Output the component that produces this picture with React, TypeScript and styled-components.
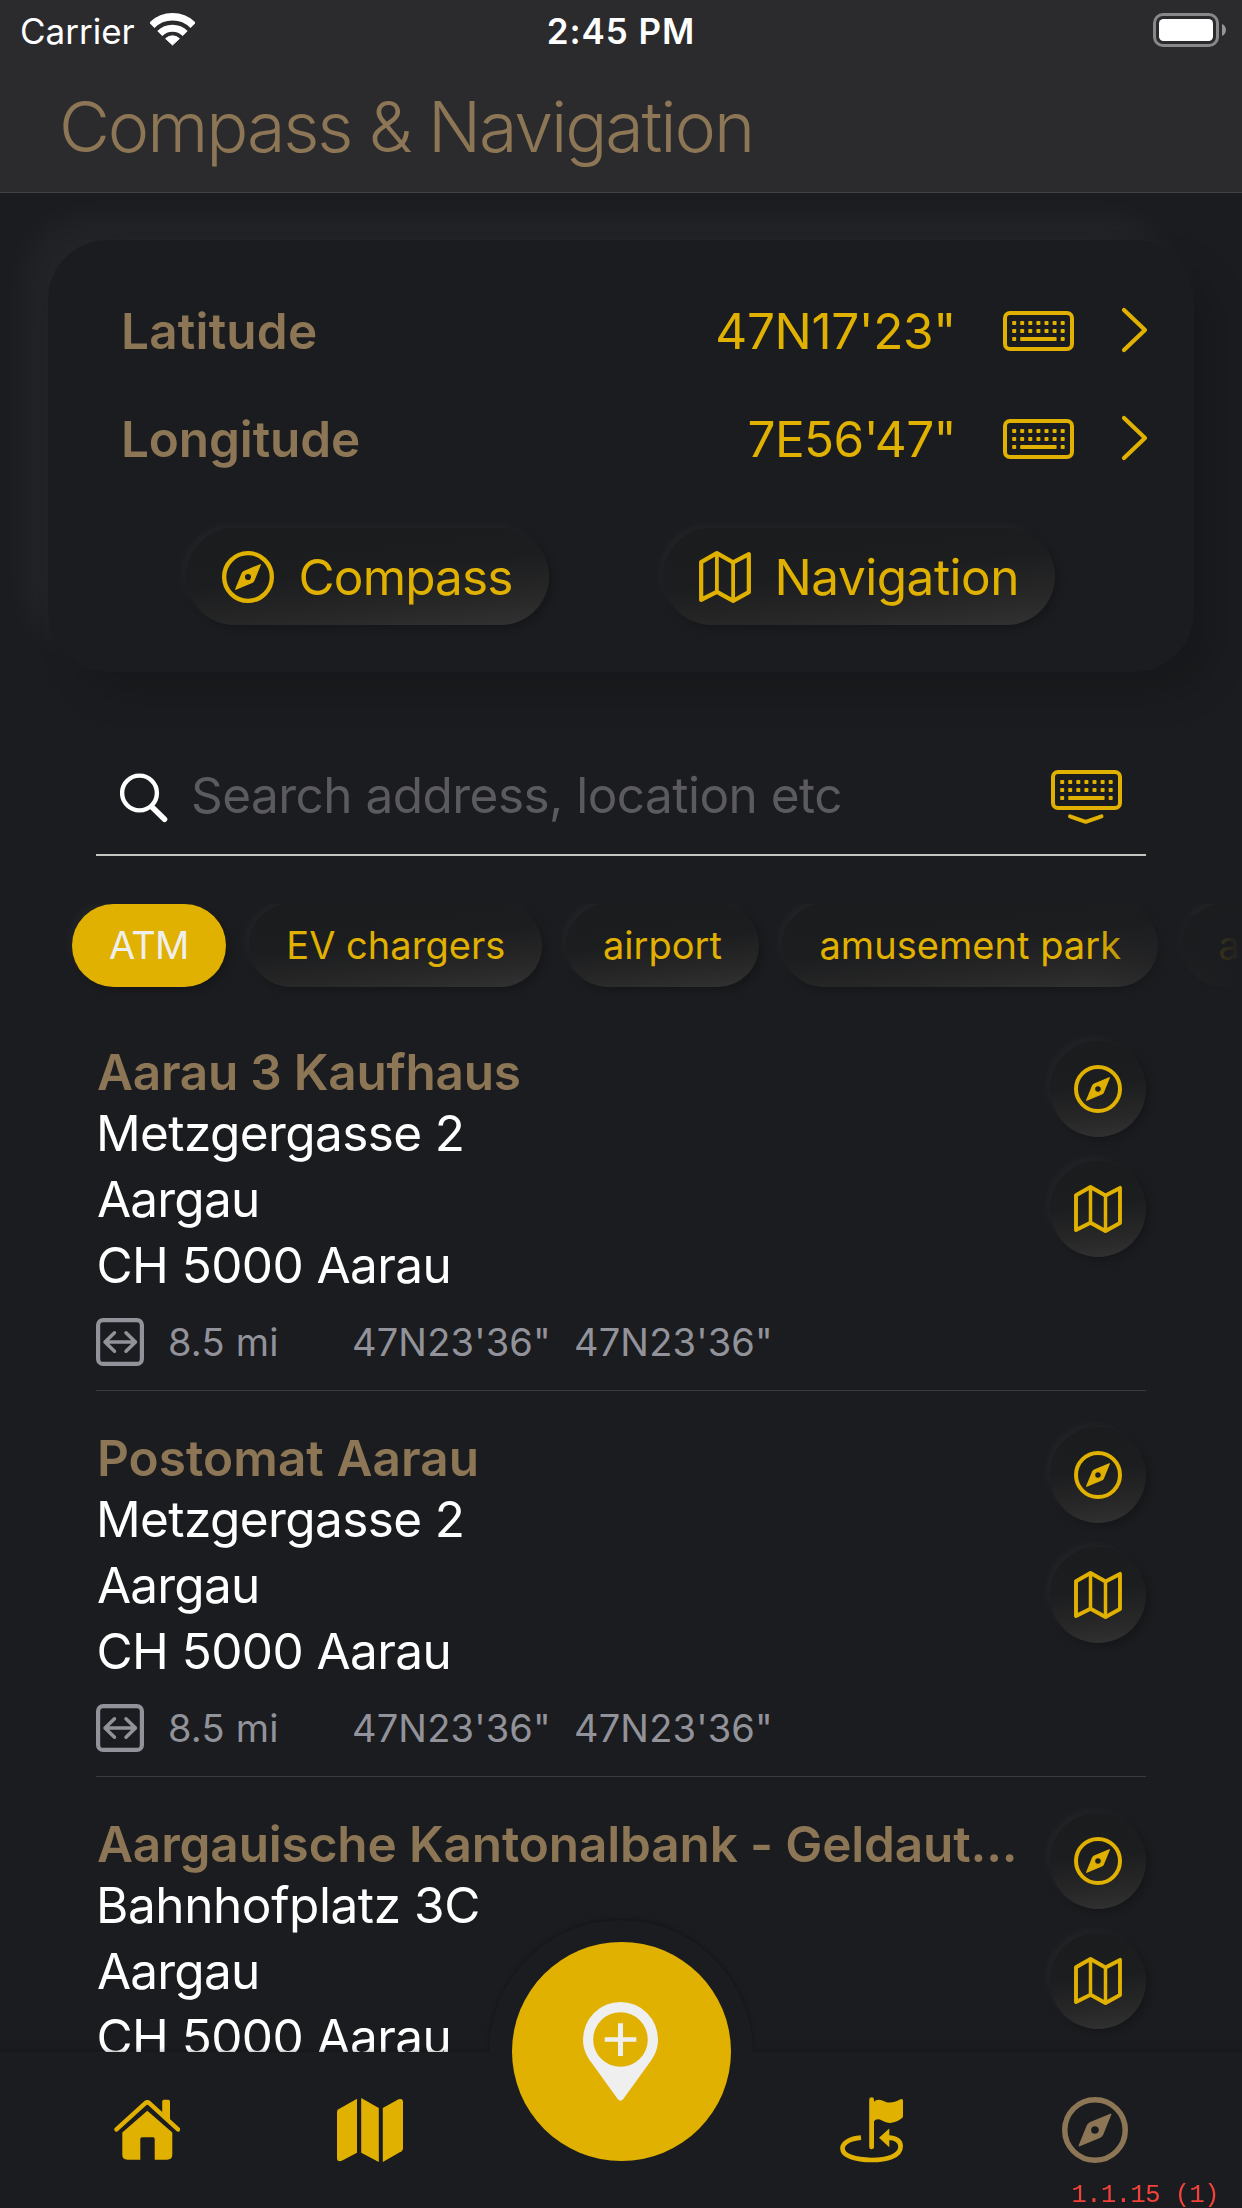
import React from "react";
import styled, { createGlobalStyle, css } from "styled-components";

const color = {
  bg: "#1b1c1f",
  header: "#2b2b2d",
  gold: "#e0b100",
  bronze: "#8c7655",
  grey: "#92929a",
};

const GlobalStyle = createGlobalStyle`
  * { box-sizing: border-box; }
  body { margin: 0; background: ${color.bg}; }
  svg { display: block; flex: none; }
`;

const raised = css`
  background: linear-gradient(174deg, #1b1c1e 0%, #1c1d1f 45%, #272727 76%, #323232 100%);
  box-shadow: -4px -4px 7px rgba(255, 255, 255, 0.032), 4px 4px 7px rgba(0, 0, 0, 0.18);
`;

const Screen = styled.main`
  position: relative;
  width: 1242px;
  height: 2208px;
  overflow: hidden;
  background: ${color.bg};
  font-family: Inter, "Liberation Sans", sans-serif;
  font-size: 49.5px;
  color: #fff;
`;

const Text = styled.span<{ $track?: number }>`
  letter-spacing: ${(p) => p.$track ?? 0}px;
  white-space: nowrap;
`;

/* ---------- header ---------- */

const Header = styled.header`
  position: relative;
  height: 193px;
  background: ${color.header};
  border-bottom: 1px solid #414144;
  z-index: 1;
`;

const StatusBar = styled.div`
  display: grid;
  grid-template-columns: 1fr auto 1fr;
  align-items: center;
  height: 60px;
  padding: 0 16px 0 20px;
  font-size: 35px;
  line-height: 44px;
`;

const Carrier = styled.div`
  display: flex;
  align-items: center;
  gap: 15px;
  padding-top: 2px;

  svg { margin-top: -4px; }
`;

const Clock = styled.div`
  font-weight: 600;
  padding: 2px 4px 0 0;
`;

const BatterySlot = styled.div`
  display: flex;
  justify-content: flex-end;
`;

const Title = styled.h1`
  margin: 25px 0 0 59px;
  font-size: 70px;
  line-height: 84px;
  font-weight: 300;
  color: ${color.bronze};
`;

/* ---------- coordinates card ---------- */

const Card = styled.section`
  height: 432px;
  margin: 47px 48px 0;
  padding-top: 37px;
  border-radius: 60px;
  background: ${color.bg};
  box-shadow: -24px -24px 36px rgba(255, 255, 255, 0.036), 24px 24px 36px rgba(0, 0, 0, 0.14);
`;

const CoordinateRow = styled.div`
  display: flex;
  align-items: center;
  height: 108px;
  padding: 0 46px 0 73px;
  color: ${color.gold};
`;

const Label = styled.div`
  flex: 1;
  font-weight: 600;
  color: ${color.bronze};
`;

const Value = styled.div`
  margin-right: 47px;
`;

const ChevronSlot = styled.div`
  margin: -2px 0 0 47px;
`;

const Actions = styled.div`
  display: flex;
  justify-content: space-between;
  margin-top: 35px;
  padding: 0 139px 0 138px;
`;

const Pill = styled.button<{ $gap: number }>`
  ${raised}
  display: flex;
  align-items: center;
  gap: ${(p) => p.$gap}px;
  height: 97px;
  padding: 0 36px;
  border: 0;
  border-radius: 49px;
  font: inherit;
  color: ${color.gold};
`;

/* ---------- search ---------- */

const SearchRow = styled.div`
  display: flex;
  align-items: center;
  height: 121px;
  margin: 63px 96px 0;
  padding: 0 24px;
  border-bottom: 2px solid #c4c4c0;
  color: ${color.gold};

  svg { margin-top: 6px; }
`;

const Placeholder = styled.div`
  flex: 1;
  padding-left: 23px;
  color: #5a5a5f;
`;

/* ---------- category chips ---------- */

const ChipStrip = styled.div`
  position: relative;
  margin-top: 48px;
  height: 107px;
  overflow: hidden;

  &::after {
    content: "";
    position: absolute;
    inset: 11px 0 0 auto;
    width: 150px;
    background: linear-gradient(90deg, rgba(27, 28, 31, 0), ${color.bg});
  }
`;

const ChipRow = styled.div`
  display: flex;
  gap: 23.5px;
  padding-left: 72px;
`;

const Chip = styled.button<{ $active?: boolean }>`
  ${raised}
  flex: none;
  height: 83px;
  padding: 0 37px;
  border: 0;
  border-radius: 42px;
  font: 400 38px/83px Inter, "Liberation Sans", sans-serif;
  color: ${color.gold};
  ${(p) => p.$active && css`
    background: ${color.gold};
    color: #efefef;
  `}
`;

/* ---------- result list ---------- */

const List = styled.ul`
  margin: 30px 96px 0;
  padding: 0;
  list-style: none;
`;

const Item = styled.li`
  display: flex;
  justify-content: space-between;
  height: 350px;
  margin-bottom: 36px;
  border-bottom: 1px solid #3b3b3e;
`;

const Details = styled.div`
  padding: 3px 0 0 1px;
`;

const Name = styled.div`
  line-height: 56px;
  font-weight: 600;
  color: ${color.bronze};
`;

const Line = styled.div<{ $shift?: number }>`
  line-height: 66px;
  margin-left: ${(p) => p.$shift ?? 0}px;
`;

const Meta = styled.div`
  display: flex;
  align-items: center;
  margin: 20px 0 0 -1px;
  font-size: 38px;
  line-height: 48px;
  color: ${color.grey};
`;

const Distance = styled.div`
  width: 184px;
  margin-left: 24px;
`;

const Position = styled.div`
  width: 222px;
`;

const ItemActions = styled.div`
  display: flex;
  flex-direction: column;
  gap: 24px;
`;

const RoundButton = styled.button`
  ${raised}
  display: grid;
  place-items: center;
  width: 96px;
  height: 96px;
  padding: 0;
  border: 0;
  border-radius: 50%;
  color: ${color.gold};
`;

/* ---------- tab bar ---------- */

const Dock = styled.nav`
  position: absolute;
  inset: auto 0 0 0;
  filter: drop-shadow(0 -1px 2px rgba(0, 0, 0, 0.3));

  &::before {
    content: "";
    position: absolute;
    left: 489px;
    top: -132px;
    width: 264px;
    height: 264px;
    border-radius: 50%;
    background: ${color.bg};
  }
`;

const DockBar = styled.div`
  position: relative;
  display: flex;
  align-items: center;
  justify-content: space-between;
  height: 156px;
  padding: 0 114px;
  background: ${color.bg};
  color: ${color.gold};
`;

const TabGroup = styled.div<{ $width: number }>`
  display: flex;
  align-items: center;
  justify-content: space-between;
  width: ${(p) => p.$width}px;
`;

const Tab = styled.div<{ $current?: boolean }>`
  color: ${(p) => (p.$current ? color.bronze : color.gold)};
`;

const AddButton = styled.button`
  display: grid;
  place-items: center;
  align-self: flex-start;
  width: 219px;
  height: 219px;
  margin: -110px 0 0;
  padding: 0 3px 0 0;
  border: 0;
  border-radius: 50%;
  background: ${color.gold};
  color: #efefef;
`;

const Version = styled.div`
  position: absolute;
  right: 23px;
  bottom: -2px;
  font: 25.5px/28px "Liberation Mono", monospace;
  letter-spacing: -0.55px;
  white-space: pre;
  color: #f4423a;
`;

/* ---------- icons ---------- */

const WifiIcon = () => (
  <svg width="45" height="33" viewBox="0 0 45 33" fill="none" stroke="#fff">
    <path d="M1.85 12.35A29.2 29.2 0 0 1 43.15 12.35" strokeWidth="7.4" />
    <path d="M9.8 20.6A18 18 0 0 1 35.2 20.6" strokeWidth="7" />
    <path d="M22.5 32 15.6 25.6A10 10 0 0 1 29.4 25.6Z" fill="#fff" strokeWidth="1" strokeLinejoin="round" />
  </svg>
);

const BatteryIcon = () => (
  <svg width="73" height="34" viewBox="0 0 73 34">
    <rect x="1.5" y="1.5" width="63" height="31" rx="8.5" fill="none" stroke="#88888a" strokeWidth="3" />
    <rect x="6" y="6" width="54" height="22" rx="4.5" fill="#fff" />
    <path d="M69 11c5.300 2 5.300 10 0 12z" fill="#959597" />
  </svg>
);

const CompassIcon = ({ size }: { size: number }) => (
  <svg width={size} height={size} viewBox="0 0 48 48">
    <circle cx="24" cy="24" r="22" fill="none" stroke="currentColor" strokeWidth="4" />
    <path
      d="M35.300 12.700 29.400 27.200Q28.900 28.400 27.700 29L12.700 35.300 18.600 20.800Q19.100 19.600 20.300 19ZM24 20.600a3.400 3.400 0 1 0 0 6.800a3.400 3.400 0 1 0 0-6.800Z"
      fill="currentColor"
      fillRule="evenodd"
      stroke="currentColor"
      strokeWidth="1.200"
      strokeLinejoin="round"
    />
  </svg>
);

const MapIcon = ({ size }: { size: number }) => (
  <svg width={size} height={size} viewBox="0 0 48 48" fill="none" stroke="currentColor" strokeWidth="3.900" strokeLinejoin="round">
    <path d="M2 10.200 16.500 2 31.500 10.500 46 2.900V38L31.500 46 16.500 37.700 2 45Z" />
    <path d="M16.500 2V37.700M31.500 10.500V46" strokeWidth="3.500" />
  </svg>
);

const keyColumns = [11.2, 19.2, 27.3, 35.4, 43.5, 51.6, 59.7];

const KeyboardIcon = ({ dismiss }: { dismiss?: boolean }) => (
  <svg width="71" height={dismiss ? 55 : 40} viewBox={dismiss ? "0 0 71 55" : "0 0 71 40"} fill="currentColor">
    <rect x="2" y="2" width="67" height="36" rx="5" fill="none" stroke="currentColor" strokeWidth="4" />
    {[12, 20].map((y) =>
      keyColumns.map((x) => <rect key={`${x}-${y}`} x={x - 2} y={y - 2} width="4" height="4" rx="0.800" />)
    )}
    <rect x="9.200" y="26" width="4" height="4" rx="0.800" />
    <rect x="17.200" y="26" width="36.400" height="4" rx="0.800" />
    <rect x="57.700" y="26" width="4" height="4" rx="0.800" />
    {dismiss && (
      <path d="M19 46.300 34.700 51.800 50.500 46.300" fill="none" stroke="currentColor" strokeWidth="3.900" strokeLinecap="round" strokeLinejoin="round" />
    )}
  </svg>
);

const ChevronIcon = () => (
  <svg width="27" height="46" viewBox="0 0 27 46" fill="none" stroke="currentColor" strokeWidth="4.200" strokeLinecap="round" strokeLinejoin="round">
    <path d="M3 3 24 23 3 43" />
  </svg>
);

const SearchIcon = () => (
  <svg width="48" height="50" viewBox="0 0 48 50" fill="none" stroke="#fff" strokeLinecap="round">
    <circle cx="19.500" cy="20" r="17.400" strokeWidth="4.400" />
    <path d="M32.500 34.500 44.500 46.200" strokeWidth="5.600" />
  </svg>
);

const DistanceIcon = () => (
  <svg width="48" height="48" viewBox="0 0 48 48" fill="none" stroke="currentColor" strokeLinecap="round" strokeLinejoin="round">
    <rect x="2.100" y="2.100" width="43.800" height="43.800" rx="5" strokeWidth="4.200" />
    <path d="M9 24H39.500M18.500 14.800 9 24 18.500 33.200M30 14.800 39.500 24 30 33.200" strokeWidth="3.500" />
  </svg>
);

const HomeIcon = () => (
  <svg width="66" height="62" viewBox="0 0 66 62" fill="currentColor">
    <path d="M48.200 13.500V2.400Q48.200 0.700 49.900 0.700H54.200Q56 0.700 56 2.400V21Z" />
    <path d="M2.500 30.400 31.300 4.200Q33.300 2.500 35.300 4.200L64 30.400" fill="none" stroke="currentColor" strokeWidth="4.400" strokeLinecap="round" />
    <path d="M33.300 11.700 58.300 33.500V55.500Q58.300 60.700 53 60.700H40.700V40Q40.700 38.200 39 38.200H28Q26.300 38.200 26.300 40V60.700H13.500Q8.300 60.700 8.300 55.500V33.500Z" />
  </svg>
);

const MapFilledIcon = () => (
  <svg width="66" height="64" viewBox="0 0 66 64" fill="currentColor">
    <path d="M20 0.800V54.700L4.800 62.800Q0 64.300 0 60V14Q0 12.300 1.500 11.300Z" />
    <path d="M24.200 0 41.800 10V64L24.200 54.700Z" />
    <path d="M45.800 10 61.500 1.200Q66 0 66 4V50.500Q66 52.300 64.500 53.200L45.800 64Z" />
  </svg>
);

const FlagIcon = () => (
  <svg width="63" height="66" viewBox="0 0 63 66" fill="currentColor">
    <rect x="29.200" y="0.300" width="4.800" height="52" rx="2.400" />
    <path d="M33.500 5.200C36 2.200 39 2 43 3.700C48.500 6.300 52.500 6.500 60.500 2.300Q63 1.500 63 3.700V19Q63 20.700 61.500 21.500C54.500 26.500 48.500 27.300 42 23.500C38.500 21.600 35.500 22 34 24.500Z" />
    <path d="M21 40.700C10 41.700 2.500 45.500 2.500 51.500C2.500 59 16 63 31.500 63C47 63 60.600 59 60.600 49.500C60.600 43.500 56 41 48.500 40.600" fill="none" stroke="currentColor" strokeWidth="4.700" />
    <path d="M39 40.700 49.300 31.500V50.300Z" />
  </svg>
);

const PinPlusIcon = () => (
  <svg width="75" height="99" viewBox="0 0 75 99" fill="currentColor">
    <path
      fillRule="evenodd"
      d="M37.500 0A37.500 37.500 0 0 1 75 37.500C75 47 71.500 54 67 60L40.300 97Q37.500 100.500 34.700 97L8 60C3.500 54 0 47 0 37.500A37.500 37.500 0 0 1 37.500 0ZM37.500 10.200a27.300 27.300 0 1 0 0 54.600a27.300 27.300 0 1 0 0-54.600Z"
    />
    <path d="M35 21.300h5v13.900h13.300v4.600H40v14.200h-5v-14.200H21.700v-4.600H35Z" />
  </svg>
);

/* ---------- data ---------- */

const coordinates = [
  { label: "Latitude", labelTrack: 0.2, value: "47N17'23\"", track: -0.38 },
  { label: "Longitude", labelTrack: -0.13, value: "7E56'47\"", track: -0.61 },
];

const chips = [
  { name: "ATM", track: -0.7, active: true },
  { name: "EV chargers", track: 0.04 },
  { name: "airport", track: 0.02 },
  { name: "amusement park", track: 0.04 },
  { name: "aquarium", track: 0 },
];

const places = [
  { name: "Aarau 3 Kaufhaus", track: -0.26, street: "Metzgergasse 2", streetTrack: -0.6 },
  { name: "Postomat Aarau", track: 0.05, street: "Metzgergasse 2", streetTrack: -0.6 },
  { name: "Aargauische Kantonalbank - Geldaut...", track: -0.15, street: "Bahnhofplatz 3C", streetTrack: -0.42 },
];

export default function App() {
  return (
    <Screen>
      <GlobalStyle />
      <Header>
        <StatusBar>
          <Carrier>
            <Text>Carrier</Text>
            <WifiIcon />
          </Carrier>
          <Clock>
            <Text $track={0.95}>2:45 PM</Text>
          </Clock>
          <BatterySlot>
            <BatteryIcon />
          </BatterySlot>
        </StatusBar>
        <Title>
          <Text $track={-2.12}>Compass &amp; Navigation</Text>
        </Title>
      </Header>

      <Card>
        {coordinates.map((c) => (
          <CoordinateRow key={c.label}>
            <Label>
              <Text $track={c.labelTrack}>{c.label}</Text>
            </Label>
            <Value>
              <Text $track={c.track}>{c.value}</Text>
            </Value>
            <KeyboardIcon />
            <ChevronSlot>
              <ChevronIcon />
            </ChevronSlot>
          </CoordinateRow>
        ))}
        <Actions>
          <Pill $gap={24.5}>
            <CompassIcon size={52} />
            <Text $track={-0.85}>Compass</Text>
          </Pill>
          <Pill $gap={24}>
            <MapIcon size={52} />
            <Text $track={-0.5}>Navigation</Text>
          </Pill>
        </Actions>
      </Card>

      <SearchRow>
        <SearchIcon />
        <Placeholder>
          <Text $track={-0.53}>Search address, location etc</Text>
        </Placeholder>
        <KeyboardIcon dismiss />
      </SearchRow>

      <ChipStrip>
        <ChipRow>
          {chips.map((c) => (
            <Chip key={c.name} $active={c.active}>
              <Text $track={c.track}>{c.name}</Text>
            </Chip>
          ))}
        </ChipRow>
      </ChipStrip>

      <List>
        {places.map((p) => (
          <Item key={p.name}>
            <Details>
              <Name>
                <Text $track={p.track}>{p.name}</Text>
              </Name>
              <Line $shift={-1}>
                <Text $track={p.streetTrack}>{p.street}</Text>
              </Line>
              <Line>
                <Text $track={-0.8}>Aargau</Text>
              </Line>
              <Line $shift={-0.5}>
                <Text $track={-0.58}>CH 5000 Aarau</Text>
              </Line>
              <Meta>
                <DistanceIcon />
                <Distance>
                  <Text $track={0.2}>8.5 mi</Text>
                </Distance>
                <Position>
                  <Text $track={0.16}>47N23'36"</Text>
                </Position>
                <Position>
                  <Text $track={0.16}>47N23'36"</Text>
                </Position>
              </Meta>
            </Details>
            <ItemActions>
              <RoundButton>
                <CompassIcon size={48} />
              </RoundButton>
              <RoundButton>
                <MapIcon size={48} />
              </RoundButton>
            </ItemActions>
          </Item>
        ))}
      </List>

      <Dock>
        <DockBar>
          <TabGroup $width={289}>
            <Tab>
              <HomeIcon />
            </Tab>
            <Tab>
              <MapFilledIcon />
            </Tab>
          </TabGroup>
          <AddButton>
            <PinPlusIcon />
          </AddButton>
          <TabGroup $width={288}>
            <Tab>
              <FlagIcon />
            </Tab>
            <Tab $current>
              <CompassIcon size={66} />
            </Tab>
          </TabGroup>
        </DockBar>
        <Version>1.1.15 (1)</Version>
      </Dock>
    </Screen>
  );
}
